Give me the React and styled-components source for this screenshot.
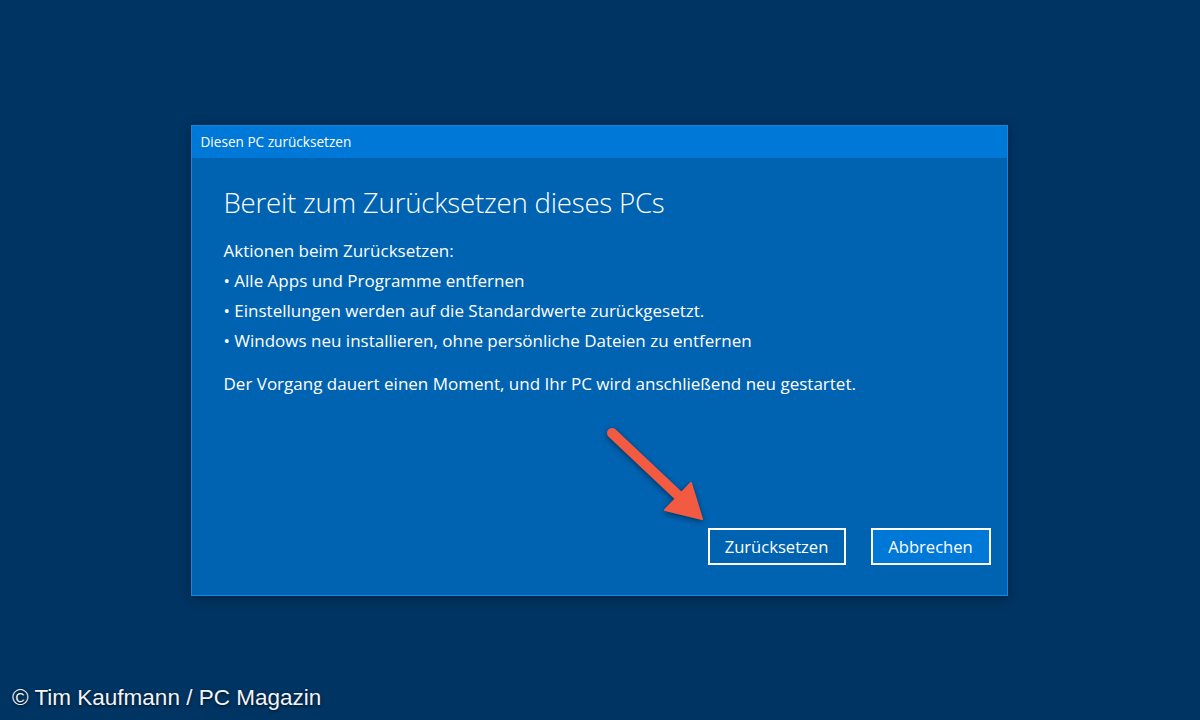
import React from "react";
import styled, { createGlobalStyle } from "styled-components";

const Global = createGlobalStyle`
  html, body { margin: 0; padding: 0; }
  body {
    background: #003462;
    font-family: "Open Sans", "Noto Sans", sans-serif;
    color: #ffffff;
  }
`;

const Screen = styled.div`
  position: relative;
  width: 1200px;
  height: 720px;
  display: flex;
  align-items: center;
  justify-content: center;
  overflow: hidden;
`;

const Dialog = styled.div`
  position: relative;
  width: 815px;
  height: 469px;
  margin-left: -2px;
  border: 1px solid #1a86db;
  background: #0063b1;
  display: flex;
  flex-direction: column;
  box-shadow: 0 2px 10px rgba(0, 0, 0, 0.35);
`;

const TitleBar = styled.div`
  height: 32px;
  background: #0078d7;
  display: flex;
  align-items: center;
  padding-left: 9px;
  font-size: 13.6px;
`;

const Body = styled.div`
  flex: 1;
  display: flex;
  flex-direction: column;
  padding: 26px 16px 30px 32px;
`;

const Heading = styled.h1`
  margin: 0 0 16px;
  font-weight: 300;
  font-size: 27.6px;
  line-height: 36px;
  letter-spacing: -0.2px;
`;

const Line = styled.p`
  margin: 0;
  font-size: 17px;
  line-height: 30.3px;
  margin-top: ${(p) => (p.$gap ? "12px" : "0")};
`;

const Actions = styled.div`
  margin-top: auto;
  display: flex;
  justify-content: flex-end;
  gap: 25px;
`;

const Button = styled.button`
  height: 37px;
  padding: 0;
  width: ${(p) => p.$w}px;
  border: 2px solid #ffffff;
  background: ${(p) => (p.$primary ? "#0078d7" : "transparent")};
  color: #ffffff;
  font-family: "Open Sans", "Noto Sans", sans-serif;
  font-size: 16.6px;
`;

const Arrow = styled.svg`
  position: absolute;
  left: 590px;
  top: 415px;
  overflow: visible;
  filter: drop-shadow(0 2px 3px rgba(0, 0, 0, 0.45));
`;

const Credit = styled.div`
  position: absolute;
  left: 12px;
  bottom: 9px;
  font-family: "Liberation Sans", Arial, sans-serif;
  font-size: 22.5px;
  color: #f2f4f8;
  text-shadow: 0 1px 3px rgba(0, 0, 0, 0.7);
`;

export default function App() {
  return (
    <Screen>
      <Global />
      <Dialog>
        <TitleBar>Diesen PC zurücksetzen</TitleBar>
        <Body>
          <Heading>Bereit zum Zurücksetzen dieses PCs</Heading>
          <Line>Aktionen beim Zurücksetzen:</Line>
          <Line>• Alle Apps und Programme entfernen</Line>
          <Line>• Einstellungen werden auf die Standardwerte zurückgesetzt.</Line>
          <Line>• Windows neu installieren, ohne persönliche Dateien zu entfernen</Line>
          <Line $gap>Der Vorgang dauert einen Moment, und Ihr PC wird anschließend neu gestartet.</Line>
          <Actions>
            <Button $w={138}>Zurücksetzen</Button>
            <Button $w={120} $primary>Abbrechen</Button>
          </Actions>
        </Body>
      </Dialog>
      <Arrow width="130" height="115" viewBox="0 0 130 115">
        <line x1="22" y1="18" x2="92" y2="84" stroke="#f25a42" strokeWidth="10" strokeLinecap="round" />
        <path d="M112 104 L75 95 L101 68 Z" fill="#f25a42" stroke="#f25a42" strokeWidth="2" strokeLinejoin="round" />
      </Arrow>
      <Credit>© Tim Kaufmann / PC Magazin</Credit>
    </Screen>
  );
}
